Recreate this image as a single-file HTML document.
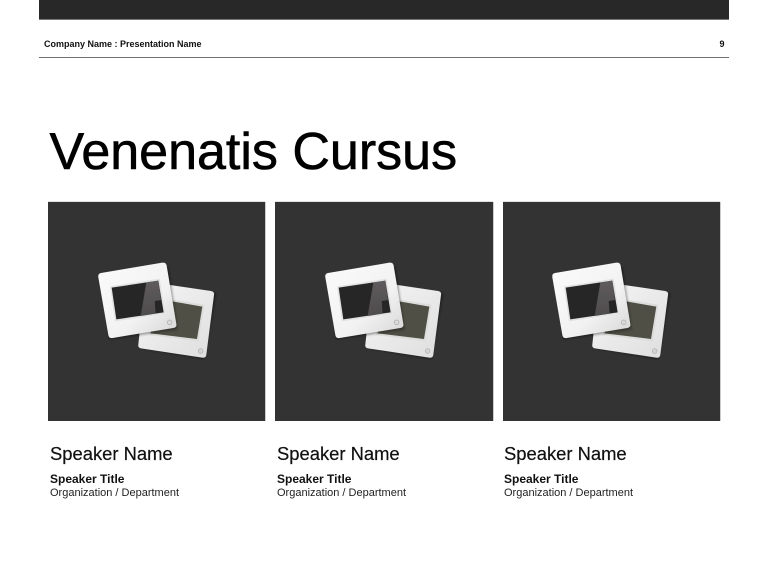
<!DOCTYPE html>
<html lang="en">
<head>
<meta charset="utf-8">
<title>Venenatis Cursus</title>
<style>
html,body{margin:0;padding:0;background:#fff;}
body{width:768px;height:576px;position:relative;overflow:hidden;font-family:"Liberation Sans",Arial,sans-serif;color:#000;}
.abs{position:absolute;white-space:nowrap;}
#bar{position:absolute;left:38.6px;top:0;width:690px;height:19px;background:#282828;border-bottom:1px solid #777;}
#rule{position:absolute;left:38.6px;top:57px;width:690px;height:1px;background:#707070;}
.hdr{font-size:9px;font-weight:bold;line-height:12px;top:38px;color:#111;}
h1{position:absolute;margin:0;left:49.5px;top:122px;font-size:52px;line-height:60px;font-weight:normal;white-space:nowrap;-webkit-text-stroke:.6px #000;}
.panel{position:absolute;top:202px;width:217px;height:219px;background:#333;box-shadow:1px 0 0 #ccc,0 -1px 0 #e2e2e2;}
.panel svg{position:absolute;left:37px;top:48px;}
.n{font-size:18.4px;line-height:22px;top:443px;color:#111;-webkit-text-stroke:.2px #111;}
.t{font-size:12px;font-weight:bold;line-height:14px;top:472px;color:#111;}
.o{font-size:11px;line-height:13px;top:486.5px;color:#222;}
</style>
</head>
<body>
<div id="bar"></div>
<div id="rule"></div>
<div class="abs hdr" style="left:44px;">Company Name : Presentation Name</div>
<div class="abs hdr" style="left:719.5px;">9</div>
<h1>Venenatis Cursus</h1>

<svg width="0" height="0" style="position:absolute">
  <defs>
    <linearGradient id="fr" x1="0" y1="0" x2="1" y2="1">
      <stop offset="0" stop-color="#fbfbfb"/><stop offset=".6" stop-color="#f2f2f2"/><stop offset="1" stop-color="#d6d6d6"/>
    </linearGradient>
    <linearGradient id="bk" x1="0" y1="0" x2="1" y2="1">
      <stop offset="0" stop-color="#f6f6f6"/><stop offset="1" stop-color="#dedede"/>
    </linearGradient>
    <linearGradient id="hl" x1="0" y1="0" x2="0" y2="1">
      <stop offset="0" stop-color="#5f5b5d"/><stop offset="1" stop-color="#4e4c4d"/>
    </linearGradient>
    <filter id="sh" x="-20%" y="-20%" width="140%" height="140%">
      <feGaussianBlur stdDeviation="4"/>
    </filter>
    <filter id="soft" x="-5%" y="-5%" width="110%" height="110%">
      <feGaussianBlur stdDeviation=".9"/>
    </filter>
    <g id="slides">
      <g filter="url(#soft)">
        <path d="M170 296 L356 328 L392 130 L260 115Z" fill="#111" opacity=".4" filter="url(#sh)"/>
        <path d="M200 97 L376 123 Q387 125 385 135 L362 314 Q361 325 349 323 L166 295 Q156 293 158 283 L178 100Z" fill="url(#bk)"/>
        <path d="M190 255 L205 140 L356 164 L339 274Z" fill="#dcdcda"/>
        <path d="M195 250 L208 145 L350 170 L334 267Z" fill="#4f4f45"/>
        <circle cx="345" cy="303" r="7" fill="#d4d4d4" stroke="#aaa" stroke-width="2"/>
        <path d="M70 268 L275 238 L248 50 L60 80Z" fill="#111" opacity=".45" filter="url(#sh)"/>
        <path d="M46 69 L230 38 Q241 36 243 47 L272 222 Q274 232 263 234 L81 264 Q70 266 68 255 L38 82 Q36 71 46 69Z" fill="url(#fr)"/>
        <path d="M73 109 L222 86 L239 191 L88 214Z" fill="#e2e2e2"/>
        <path d="M78 113 L218 92 L234 187 L92 208Z" fill="#282825"/>
        <path d="M182 98 L218 92 L226 150 L207 153 L210 191 L165 198Z" fill="url(#hl)"/>
        <circle cx="252" cy="217" r="7" fill="#dadada" stroke="#a8a8a8" stroke-width="2"/>
      </g>
    </g>
  </defs>
</svg>

<div class="panel" style="left:48px;"><svg width="140" height="120" viewBox="0 0 420 360"><use href="#slides" x="2"/></svg></div>
<div class="panel" style="left:275px;width:218px;"><svg width="140" height="120" viewBox="0 0 420 360"><use href="#slides" x="2"/></svg></div>
<div class="panel" style="left:503px;"><svg width="140" height="120" viewBox="0 0 420 360" style="left:36px;"><use href="#slides" x="2"/></svg></div>

<div class="abs n" style="left:50px;">Speaker Name</div>
<div class="abs t" style="left:50px;">Speaker Title</div>
<div class="abs o" style="left:50px;">Organization / Department</div>

<div class="abs n" style="left:277px;">Speaker Name</div>
<div class="abs t" style="left:277px;">Speaker Title</div>
<div class="abs o" style="left:277px;">Organization / Department</div>

<div class="abs n" style="left:504px;">Speaker Name</div>
<div class="abs t" style="left:504px;">Speaker Title</div>
<div class="abs o" style="left:504px;">Organization / Department</div>
</body>
</html>
